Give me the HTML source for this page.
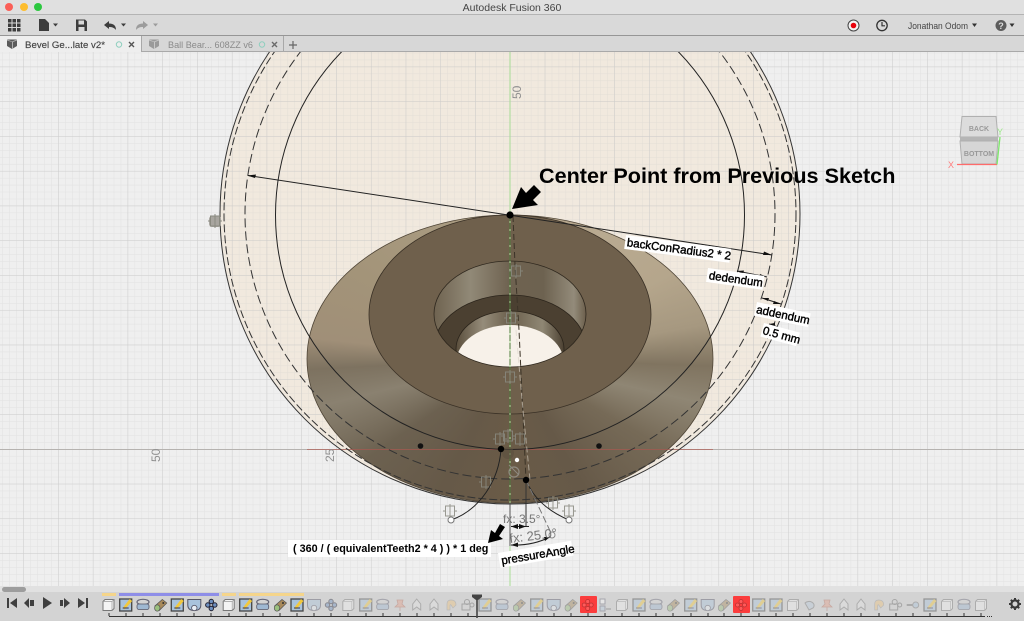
<!DOCTYPE html>
<html><head><meta charset="utf-8"><style>
html,body{margin:0;padding:0;width:1024px;height:621px;overflow:hidden;background:#efefef;font-family:"Liberation Sans",sans-serif}
svg{position:absolute;left:0;top:0;filter:blur(.3px)}
#body{position:absolute;left:307px;top:215px;width:406px;height:288px;border-radius:50%;
background:conic-gradient(from 0deg,#b0a188 0deg,#b9aa91 35deg,#b5a68c 62deg,#a69880 80deg,#807460 92deg,#8f8674 103deg,#766a57 120deg,#665948 150deg,#6a5b47 180deg,#665948 208deg,#6c6150 235deg,#8a8170 256deg,#7d7260 267deg,#a08f78 276deg,#a39479 300deg,#a89a80 330deg,#b0a188 360deg)}
</style></head><body>
<svg width="1024" height="621" viewBox="0 0 1024 621">
<defs>
<pattern id="gm" patternUnits="userSpaceOnUse" x="510" y="449" width="6.952" height="6.952"><path d="M0 0V6.952M0 0H6.952" stroke="#c8c8c8" stroke-opacity=".35" stroke-width="1" fill="none"/></pattern>
<pattern id="gM" patternUnits="userSpaceOnUse" x="510" y="449" width="34.76" height="34.76"><path d="M0 0V34.76M0 0H34.76" stroke="#c4c4c4" stroke-opacity=".7" stroke-width="1" fill="none"/></pattern>
</defs>
<rect width="1024" height="621" fill="#efefef"/>
<circle cx="510" cy="214" r="290" fill="#f1e9de"/>
<rect y="52" width="1024" height="535" fill="url(#gm)"/>
<rect y="52" width="1024" height="535" fill="url(#gM)"/>
</svg>
<div id="body"></div>
<svg width="1024" height="621" viewBox="0 0 1024 621" font-family="Liberation Sans, sans-serif">
<defs>
<clipPath id="canvas"><rect y="52" width="1024" height="534"/></clipPath>
<clipPath id="hole"><ellipse cx="510" cy="314" rx="76" ry="53"/></clipPath>
<linearGradient id="w1" x1="0" x2="1"><stop offset="0" stop-color="#6f6350"/><stop offset=".24" stop-color="#918977"/><stop offset=".5" stop-color="#6e6250"/><stop offset=".72" stop-color="#6d6250"/><stop offset=".92" stop-color="#938b7a"/><stop offset="1" stop-color="#6c5f4c"/></linearGradient>
<linearGradient id="w2" x1="0" x2="1"><stop offset="0" stop-color="#5a4e3c"/><stop offset=".25" stop-color="#958c7a"/><stop offset=".5" stop-color="#6b5f4c"/><stop offset=".8" stop-color="#8f8774"/><stop offset="1" stop-color="#4c4132"/></linearGradient>
<g id="ib"><path d="M-5.500 -3.500 L-3.500 -5.500 H5.500 V3.500 L3.500 5.500 H-5.500Z" fill="#f4f4f4" stroke="#777" stroke-width="1"/><path d="M-5.500 -3.500H3.500V5.500M3.500 -3.500L5.500 -5.500" fill="none" stroke="#999" stroke-width=".7"/></g>
<g id="is"><rect x="-6" y="-6" width="12" height="12" fill="#a9c3dc" stroke="#444" stroke-width="1.300"/><path d="M-3 3L4 -6L6.500 -4L-1 4.500Z" fill="#f2c83c"/><path d="M-3 3H3" stroke="#335" stroke-width="1"/></g>
<g id="ir"><ellipse cy="-3" rx="6" ry="2.700" fill="none" stroke="#667" stroke-width="1.200"/><rect x="-6" y="-1" width="12" height="5.500" rx="2" fill="#9fb8d2" stroke="#556" stroke-width=".8"/></g>
<g id="ig"><path d="M-5.500 1L2 -5.500L6.500 -2L-1 5.500Z" fill="#a88a5c" stroke="#555" stroke-width=".7"/><ellipse cx="-3" cy="3" rx="2.700" ry="3.200" fill="#9bc07e" stroke="#555" stroke-width=".7"/><circle cx="3" cy="-2" r="1" fill="#333"/></g>
<g id="il"><path d="M-6.500 -5.500H6.500V0Q6.500 5.500 0 5.500Q-6.500 5.500 -6.500 0Z" fill="#a9c3dc" stroke="#556" stroke-width="1"/><circle cy="3" r="2.700" fill="#e8eef4" stroke="#556" stroke-width=".8"/></g>
<g id="ic"><g fill="#6d8fc0" stroke="#223" stroke-width="1"><circle cx="0" cy="-3.500" r="2.200"/><circle cx="0" cy="3.500" r="2.200"/><circle cx="-3.500" cy="0" r="2.200"/><circle cx="3.500" cy="0" r="2.200"/></g></g>
<g id="icr"><g fill="#ff5a5a" stroke="#b33" stroke-width=".8"><circle cx="0" cy="-3.500" r="2"/><circle cx="0" cy="3.500" r="2"/><circle cx="-3.500" cy="0" r="2"/><circle cx="3.500" cy="0" r="2"/></g></g>
<g id="ip"><path d="M-3 -5H3L2 -1L5 2H-5L-2 -1Z M0 2V6" fill="#e5a18a" stroke="#b87060" stroke-width=".8"/></g>
<g id="ia"><path d="M0 -6L4 -1V5L0 2L-4 5V-1Z" fill="#e4e4e4" stroke="#777" stroke-width="1"/></g>
<g id="io"><path d="M-4 5V-1Q-4 -5 0 -5Q5 -5 5 0L2 3L0 0Q-1 -1 -1 1V5Z" fill="#efc37f" stroke="#999" stroke-width=".7"/></g>
<g id="ij"><rect x="-6" y="-1" width="8" height="6" fill="none" stroke="#666"/><circle cx="-1" cy="-3" r="2.500" fill="none" stroke="#666"/><circle cx="4" cy="0" r="2" fill="none" stroke="#666"/></g>
<g id="iy"><path d="M-5 -2A5 4 0 1 1 3 3L-1 5Z" fill="#b9cbdc" stroke="#777"/></g>
<g id="iai"><path d="M-6 0H0" stroke="#555" stroke-width="1.500"/><circle cx="3" cy="0" r="3" fill="#a9c3dc" stroke="#777"/></g>
<g id="ia2"><rect x="-5" y="-6" width="5" height="5" fill="#fff" stroke="#667"/><rect x="-5" y="1" width="5" height="5" fill="#b8cde0" stroke="#667"/><path d="M1 4H6" stroke="#555"/></g>
<g id="con"><rect x="-4.500" y="-5" width="9" height="10" fill="none" stroke="#8a8a80" stroke-width="1"/><path d="M0 -7V7M-7 0H-4.500M4.500 0H7" stroke="#8a8a80" stroke-width="1" fill="none"/></g>
</defs>

<g clip-path="url(#canvas)">
<ellipse cx="510" cy="359" rx="203" ry="144" fill="none" stroke="#4f4536" stroke-width=".8"/>
<ellipse cx="510" cy="314.500" rx="141" ry="99.500" fill="#6f604c" stroke="#3a3126" stroke-width=".8"/>
<ellipse cx="510" cy="314" rx="76" ry="53" fill="url(#w1)"/>
<g clip-path="url(#hole)">
<ellipse cx="510" cy="348" rx="76" ry="53" fill="#4b4031" stroke="#2b241b" stroke-width=".8"/>
<ellipse cx="510" cy="349" rx="54" ry="38" fill="url(#w2)" stroke="#2b241b" stroke-width=".8"/>
<ellipse cx="510" cy="363" rx="54" ry="38" fill="#f7f1e9"/>
</g>
<ellipse cx="510" cy="314" rx="76" ry="53" fill="none" stroke="#2f281e" stroke-width=".8"/>

<path d="M510 52V586" stroke="#a8dc96" stroke-width="1"/>
<path d="M510 215V503" stroke="#4f7a3c" stroke-width="1" stroke-dasharray="6 2"/>
<path d="M0 449.500H307" stroke="#b5b2af" stroke-width="1"/><path d="M713 449.500H1024" stroke="#b5b2af" stroke-width="1"/>
<path d="M307 449.500H713" stroke="#a55a50" stroke-width=".8"/>

<circle cx="510" cy="214" r="290" fill="none" stroke="#333" stroke-width="1"/>
<circle cx="510" cy="214" r="286" fill="none" stroke="#333" stroke-width="1" stroke-dasharray="8 3"/>
<circle cx="510" cy="214" r="265" fill="none" stroke="#333" stroke-width="1" stroke-dasharray="9 4"/>
<circle cx="510" cy="215" r="234.500" fill="none" stroke="#222" stroke-width="1"/>
<path d="M513 216L515 265L519 330L526 480" fill="none" stroke="#3c3428" stroke-width="1" stroke-dasharray="6 3"/>
<path d="M516 330L522 400L530 480" fill="none" stroke="#d8d2c6" stroke-opacity=".6" stroke-width="1" stroke-dasharray="6 3"/>

<path d="M248 175.500L772 255" stroke="#222" stroke-width="1"/>
<path d="M247 175.500L256 174.500L255 178Z" fill="#111"/>
<path d="M772 255L764 251.500L763 255Z" fill="#111"/>
<path d="M737 271L767 277" stroke="#222"/><path d="M737 271L744 270.500L743 274ZM767 277L760 274L759 277Z" fill="#111"/>
<path d="M762 298L781 304" stroke="#222"/><path d="M762 298L769 298L768 301ZM781 304L774 301L773 304Z" fill="#111"/>
<path d="M769 324L778 327" stroke="#222"/><path d="M769 324L775 323L775 327Z" fill="#111"/>

<g opacity=".85">
<use href="#con" x="516" y="271"/><use href="#con" x="511" y="318"/><use href="#con" x="510" y="377"/>
<use href="#con" x="500" y="439"/><use href="#con" x="508" y="436"/><use href="#con" x="520" y="439"/>
<use href="#con" x="486" y="482"/><use href="#con" x="553" y="503"/><use href="#con" x="450" y="511"/><use href="#con" x="569" y="511"/>
</g>
<rect x="209" y="216" width="12" height="11" rx="3" fill="#a8a59f"/><use href="#con" x="215" y="221"/>
<circle cx="514" cy="472" r="5" fill="none" stroke="#8f8a80" stroke-width="1.200"/>
<path d="M509 465L519 475" stroke="#8f8a80"/>
<circle cx="517" cy="460" r="2.200" fill="#fff"/>
<circle cx="508" cy="453" r="6" fill="#5c5040" fill-opacity=".6"/>

<path d="M501 449C499 480 480 510 451 520" fill="none" stroke="#222" stroke-width="1"/>
<path d="M526 480C534 500 550 512 569 520" fill="none" stroke="#222" stroke-width="1"/>
<path d="M526 480V527" stroke="#333" stroke-width="1"/>
<path d="M526 480L552 535" stroke="#777" stroke-width="1" stroke-dasharray="7 3"/>
<path d="M510 503V546" stroke="#555" stroke-width="1"/>
<circle cx="451" cy="520" r="3" fill="#fff" stroke="#777"/>
<circle cx="569" cy="520" r="3" fill="#fff" stroke="#777"/>
<circle cx="552" cy="535" r="3" fill="#f4f4f4" stroke="#888"/>
<path d="M511 526.500H529" stroke="#222"/><path d="M511 526.500L518 524V529ZM526 526.500L519 524V529Z" fill="#111"/>
<path d="M511 545Q532 546 550 537" fill="none" stroke="#222"/><path d="M511 545L518 542.500V547ZM550 537L544 537L545 541Z" fill="#111"/>
<text x="503" y="523" font-size="12" fill="#777">fx: 3.5°</text>
<text transform="translate(510 543) rotate(-7)" font-size="13" fill="#777">fx: 25.0°</text>

<circle cx="510" cy="215" r="3.600" fill="#000"/>
<circle cx="501" cy="449" r="3.200" fill="#000"/>
<circle cx="526" cy="480" r="3.200" fill="#000"/>
<circle cx="420.500" cy="446" r="2.800" fill="#111"/>
<circle cx="599" cy="446" r="2.800" fill="#111"/>

<text transform="translate(521 99) rotate(-90)" font-size="12" fill="#8f8f8f">50</text>
<text transform="translate(160 462) rotate(-90)" font-size="12" fill="#8f8f8f">50</text>
<text transform="translate(334 462) rotate(-90)" font-size="12" fill="#8f8f8f">25</text>

<text x="539" y="183" font-size="21.600" font-weight="bold" fill="#000">Center Point from Previous Sketch</text>
<path d="M512 209L521 187L526 193L534 185L541 192L533 200L538 205Z" fill="#000"/>
<g transform="translate(626 235) rotate(7.500)"><rect width="106" height="14" fill="#fff"/><text x="2" y="11" font-size="11.500" fill="#000" stroke="#000" stroke-width=".4">backConRadius2 * 2</text></g>
<g transform="translate(708 268) rotate(8)"><rect width="57" height="14" fill="#fff"/><text x="2" y="11" font-size="11.500" fill="#000" stroke="#000" stroke-width=".4">dedendum</text></g>
<g transform="translate(757 302) rotate(12)"><rect width="55" height="14" fill="#fff"/><text x="1" y="11" font-size="11.500" fill="#000" stroke="#000" stroke-width=".4">addendum</text></g>
<g transform="translate(764 323) rotate(15)"><rect width="37" height="14" fill="#fff"/><text x="1" y="11" font-size="11.500" fill="#000" stroke="#000" stroke-width=".4">0.5 mm</text></g>
<rect x="288" y="540" width="203" height="17" fill="#fff"/>
<text x="293" y="552" font-size="10.800" font-weight="bold" fill="#000">( 360 / ( equivalentTeeth2 * 4 ) ) * 1 deg</text>
<path d="M488 543L491 530L495 533L500 524L505 527L499 536L503 539Z" fill="#000"/>
<g transform="translate(498 553) rotate(-9.500)"><rect width="74" height="15" fill="#fff"/><text x="2" y="12" font-size="11.500" fill="#000" stroke="#000" stroke-width=".4">pressureAngle</text></g>

<path d="M962 116.500H996L998 137H960Z" fill="#dcdcdc" stroke="#b0b0b0"/>
<path d="M960 137H998V141H960Z" fill="#b5b5b5"/>
<path d="M960 141H998L996 164H962Z" fill="#d6d6d6" stroke="#b0b0b0"/>
<text x="979" y="131" font-size="7" font-weight="bold" text-anchor="middle" fill="#999">BACK</text>
<text x="979" y="156" font-size="7" font-weight="bold" text-anchor="middle" fill="#999">BOTTOM</text>
<path d="M957 164.500H997" stroke="#ff6b6b" stroke-width="1.300"/>
<path d="M997 164.500L1000 137" stroke="#7ee86b" stroke-width="1.300"/>
<text x="948" y="168" font-size="9" fill="#ff7b7b">X</text>
<text x="997" y="135" font-size="9" fill="#9be889">Y</text>
</g>

<rect width="1024" height="14.500" fill="#e0e0e0"/>
<rect y="14" width="1024" height="1" fill="#b4b4b4"/>
<circle cx="9" cy="7" r="4" fill="#fb5f57"/><circle cx="24" cy="7" r="4" fill="#fdbd2e"/><circle cx="38" cy="7" r="4" fill="#2cc840"/>
<text x="512" y="11" font-size="10.500" text-anchor="middle" fill="#444">Autodesk Fusion 360</text>

<rect y="15" width="1024" height="20.500" fill="#d9d9d9"/>
<rect y="35" width="1024" height="1" fill="#969696"/>
<g fill="#3d3d3d">
<rect x="8" y="19" width="3.500" height="3.500"/><rect x="12.500" y="19" width="3.500" height="3.500"/><rect x="17" y="19" width="3.500" height="3.500"/>
<rect x="8" y="23.500" width="3.500" height="3.500"/><rect x="12.500" y="23.500" width="3.500" height="3.500"/><rect x="17" y="23.500" width="3.500" height="3.500"/>
<rect x="8" y="28" width="3.500" height="3.500"/><rect x="12.500" y="28" width="3.500" height="3.500"/><rect x="17" y="28" width="3.500" height="3.500"/>
<path d="M39 19H45L49 23V31H39Z"/>
<path d="M53 23.500H58L55.500 26.500Z"/>
<path fill-rule="evenodd" d="M76 19.500H85L87 21.500V31H76ZM78.500 20.500V24.500H84V20.500ZM78.500 27V31H84.500V27Z"/>
<path d="M104 25L109 21V23.500C114 23.500 116 26 116 30C114 27.500 112 27 109 27V29Z"/>
<path d="M121 23.500H126L123.500 26.500Z"/>
</g>
<g fill="#9c9c9c"><path d="M148 25L143 21V23.500C138 23.500 136 26 136 30C138 27.500 140 27 143 27V29Z"/><path d="M153 23.500H158L155.500 26.500Z"/></g>
<circle cx="853.500" cy="25.500" r="5.500" fill="#f2f2f2" stroke="#444"/><circle cx="853.500" cy="25.500" r="2.800" fill="#e8000b"/>
<circle cx="882" cy="25.500" r="5.200" fill="none" stroke="#333" stroke-width="1.300"/><path d="M882 22V25.800H885" fill="none" stroke="#333" stroke-width="1.200"/>
<text x="908" y="29" font-size="9.500" fill="#444" textLength="60" lengthAdjust="spacingAndGlyphs">Jonathan Odom</text>
<path d="M972 23.500H977L974.500 27Z" fill="#333"/>
<circle cx="1001" cy="25.500" r="5.500" fill="#5c5c5c"/><text x="1001" y="29" font-size="9" font-weight="bold" text-anchor="middle" fill="#ddd">?</text>
<path d="M1009.500 23.500H1014.500L1012 27Z" fill="#333"/>

<rect y="36" width="1024" height="15.500" fill="#d7d7d7"/>
<rect y="36" width="141" height="16" fill="#eeeeee"/>
<rect x="141" y="36" width="1" height="16" fill="#a8a8a8"/><rect x="283" y="36" width="1" height="16" fill="#a8a8a8"/>
<rect x="141" y="51" width="883" height="1" fill="#a9a9a9"/>
<path d="M7 39.500H17V46L12 49L7 46Z" fill="#5a5a5a"/><path d="M7 39.500L12 41.500L17 39.500V40.500L13 42V49H12V42L7 40.500Z" fill="#b0b0b0"/>
<text x="25" y="48" font-size="9.500" fill="#444" stroke="#444" stroke-width=".15" textLength="80" lengthAdjust="spacingAndGlyphs">Bevel Ge...late v2*</text>
<circle cx="119" cy="44.500" r="2.700" fill="none" stroke="#8fcfbf" stroke-width="1"/>
<path d="M129 42L134 47M134 42L129 47" stroke="#555" stroke-width="1.400"/>
<path d="M149 39.500H159V46L154 49L149 46Z" fill="#9a9a9a"/><path d="M149 39.500L154 41.500L159 39.500V40.500L155 42V49H154V42L149 40.500Z" fill="#c8c8c8"/>
<text x="168" y="48" font-size="9.500" fill="#8a8a8a" textLength="85" lengthAdjust="spacingAndGlyphs">Ball Bear... 608ZZ v6</text>
<circle cx="262" cy="44.500" r="2.700" fill="none" stroke="#8fcfbf" stroke-width="1"/>
<path d="M272 42L277 47M277 42L272 47" stroke="#6b6b6b" stroke-width="1.400"/>
<path d="M293 41V49M289 45H297" stroke="#666" stroke-width="1.200"/>

<rect y="586" width="1024" height="7" fill="#e1e1e1"/>
<rect x="2" y="587" width="24" height="5" rx="2.500" fill="#9d9d9d"/>
<rect y="592" width="1024" height="29" fill="#d3d3d3"/>
<rect x="102" y="593" width="14" height="3" fill="#f5d58b"/><rect x="119" y="593" width="100" height="3" fill="#8e8ee8"/><rect x="222" y="593" width="14" height="3" fill="#f5d58b"/><rect x="239" y="593" width="65" height="3" fill="#f5d58b"/>
<g fill="#3f3f3f">
<path d="M7 598H9V608H7ZM17 598V608L10 603Z"/>
<path d="M29 598V608L24 603ZM30 600H34V606H30Z"/>
<path d="M43 597L52 603L43 609Z"/>
<path d="M60 600H63V606H60ZM64 598L70 603L64 608Z"/>
<path d="M78 598L85 603L78 608ZM86 598H88V608H86Z"/>
</g>
<path d="M109 616.500H985" stroke="#333" stroke-width="1"/>
<path d="M987 616.500H992" stroke="#333" stroke-dasharray="1 1"/>

<g>
<use href="#ib" x="108.500" y="605"/><use href="#is" x="125.700" y="605"/><use href="#ir" x="143" y="605"/><use href="#ig" x="160.300" y="605"/><use href="#is" x="177.300" y="605"/><use href="#il" x="194.300" y="605"/><use href="#ic" x="211.300" y="605"/><use href="#ib" x="228.700" y="605"/><use href="#is" x="245.700" y="605"/><use href="#ir" x="262.700" y="605"/><use href="#ig" x="280" y="605"/><use href="#is" x="297" y="605"/>
</g>
<rect x="580" y="596" width="17" height="17" rx="1" fill="#fb3d3d"/>
<rect x="733" y="596" width="17" height="17" rx="1" fill="#fb3d3d"/>
<g opacity=".42">
<use href="#il" x="314" y="605"/><use href="#ic" x="331" y="605"/><use href="#ib" x="348.300" y="605"/><use href="#is" x="365.700" y="605"/><use href="#ir" x="382.700" y="605"/><use href="#ip" x="400" y="605"/><use href="#ia" x="416.700" y="605"/><use href="#ia" x="434" y="605"/><use href="#io" x="451" y="605"/><use href="#ij" x="468" y="605"/><use href="#is" x="485" y="605"/><use href="#ir" x="502" y="605"/><use href="#ig" x="519" y="605"/><use href="#is" x="536.700" y="605"/><use href="#il" x="553.700" y="605"/><use href="#ig" x="570.700" y="605"/><use href="#ia2" x="605" y="605"/><use href="#ib" x="622" y="605"/><use href="#is" x="639" y="605"/><use href="#ir" x="656" y="605"/><use href="#ig" x="673" y="605"/><use href="#is" x="690.700" y="605"/><use href="#il" x="707.700" y="605"/><use href="#ig" x="724" y="605"/><use href="#is" x="758.700" y="605"/><use href="#is" x="776" y="605"/><use href="#ib" x="793" y="605"/><use href="#iy" x="810" y="605"/><use href="#ip" x="827" y="605"/><use href="#ia" x="844" y="605"/><use href="#ia" x="861" y="605"/><use href="#io" x="878.700" y="605"/><use href="#ij" x="895.700" y="605"/><use href="#iai" x="912.700" y="605"/><use href="#is" x="930" y="605"/><use href="#ib" x="947" y="605"/><use href="#ir" x="964" y="605"/><use href="#ib" x="981" y="605"/>
</g>
<use href="#icr" x="587.700" y="605"/><use href="#icr" x="741" y="605"/>
<path d="M109 613V616M126 613V616M143 613V616M160 613V616M177 613V616M194 613V616M211 613V616M229 613V616M246 613V616M263 613V616M280 613V616M297 613V616M314 613V616M331 613V616M348 613V616M366 613V616M383 613V616M400 613V616M417 613V616M434 613V616M451 613V616M468 613V616M502 613V616M519 613V616M537 613V616M554 613V616M571 613V616M588 613V616M605 613V616M622 613V616M639 613V616M656 613V616M673 613V616M691 613V616M708 613V616M724 613V616M741 613V616M759 613V616M776 613V616M793 613V616M810 613V616M827 613V616M844 613V616M861 613V616M879 613V616M896 613V616M913 613V616M930 613V616M947 613V616M964 613V616M981 613V616" stroke="#333" stroke-width="1"/>
<path d="M472 594.500H482V597L478 600H476L472 597Z" fill="#444"/><path d="M477 599V618" stroke="#444" stroke-width="1.600"/>
<g transform="translate(1015 604)"><circle r="3.600" fill="none" stroke="#3a3a3a" stroke-width="2.200"/><path d="M0 -6V-4M0 4V6M-6 0H-4M4 0H6M-4.200 -4.200L-2.800 -2.800M2.800 2.800L4.200 4.200M4.200 -4.200L2.800 -2.800M-2.800 2.800L-4.200 4.200" stroke="#3a3a3a" stroke-width="2"/></g>
</svg>
</body></html>
